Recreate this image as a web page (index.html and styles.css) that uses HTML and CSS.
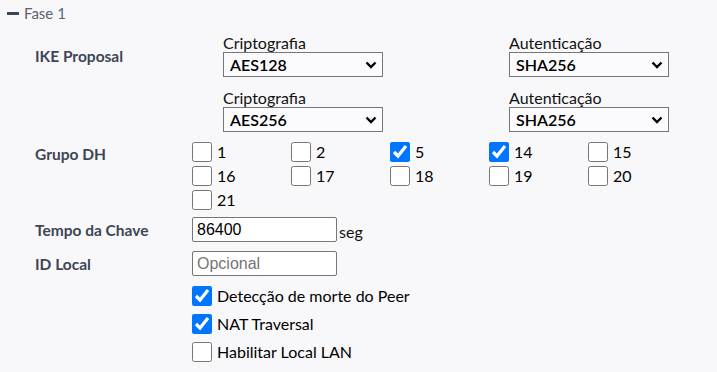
FILE: index.html
```html
<!DOCTYPE html>
<html lang="pt">
<head>
    <meta charset="UTF-8">
    <meta name="viewport" content="width=device-width, initial-scale=1.0">
    <title>Fase 1</title>
    <link rel="stylesheet" href="styles.css">
</head>
<body>
    <div class="phase-title">
        <span class="minus"></span>
        <span>Fase 1</span>
    </div>
    <div class="phase-body">
        <div class="row row-ike">
            <div class="row-label">IKE Proposal</div>
            <div class="proposals">
                <div class="field">
                    <label>Criptografia</label>
                    <div class="select-wrap">
                        <select>
                            <option>AES128</option>
                            <option>AES256</option>
                        </select>
                        <svg class="chevron" width="12" height="8" viewBox="0 0 12 8"><path d="M1.5 1.5 L6 6 L10.5 1.5" fill="none" stroke="#000" stroke-width="2.4"/></svg>
                    </div>
                </div>
                <div class="field">
                    <label>Autenticação</label>
                    <div class="select-wrap">
                        <select>
                            <option>SHA256</option>
                            <option>SHA1</option>
                        </select>
                        <svg class="chevron" width="12" height="8" viewBox="0 0 12 8"><path d="M1.5 1.5 L6 6 L10.5 1.5" fill="none" stroke="#000" stroke-width="2.4"/></svg>
                    </div>
                </div>
                <div class="field">
                    <label>Criptografia</label>
                    <div class="select-wrap">
                        <select>
                            <option>AES256</option>
                            <option>AES128</option>
                        </select>
                        <svg class="chevron" width="12" height="8" viewBox="0 0 12 8"><path d="M1.5 1.5 L6 6 L10.5 1.5" fill="none" stroke="#000" stroke-width="2.4"/></svg>
                    </div>
                </div>
                <div class="field">
                    <label>Autenticação</label>
                    <div class="select-wrap">
                        <select>
                            <option>SHA256</option>
                            <option>SHA1</option>
                        </select>
                        <svg class="chevron" width="12" height="8" viewBox="0 0 12 8"><path d="M1.5 1.5 L6 6 L10.5 1.5" fill="none" stroke="#000" stroke-width="2.4"/></svg>
                    </div>
                </div>
            </div>
        </div>

        <div class="row row-dh">
            <div class="row-label">Grupo DH</div>
            <div class="dh-grid">
                <label class="check"><input type="checkbox"> 1</label>
                <label class="check"><input type="checkbox"> 2</label>
                <label class="check"><input type="checkbox" checked> 5</label>
                <label class="check"><input type="checkbox" checked> 14</label>
                <label class="check"><input type="checkbox"> 15</label>
                <label class="check"><input type="checkbox"> 16</label>
                <label class="check"><input type="checkbox"> 17</label>
                <label class="check"><input type="checkbox"> 18</label>
                <label class="check"><input type="checkbox"> 19</label>
                <label class="check"><input type="checkbox"> 20</label>
                <label class="check"><input type="checkbox"> 21</label>
            </div>
        </div>

        <div class="row row-input">
            <div class="row-label">Tempo da Chave</div>
            <div class="inline">
                <input type="text" value="86400">
                <span class="unit">seg</span>
            </div>
        </div>

        <div class="row row-input row-local">
            <div class="row-label">ID Local</div>
            <div class="inline">
                <input type="text" placeholder="Opcional">
            </div>
        </div>

        <div class="row row-options">
            <div class="row-label"></div>
            <div class="options">
                <label class="check"><input type="checkbox" checked> Detecção de morte do Peer</label>
                <label class="check"><input type="checkbox" checked> NAT Traversal</label>
                <label class="check"><input type="checkbox"> Habilitar Local LAN</label>
            </div>
        </div>
    </div>
</body>
</html>
```

FILE: styles.css
```css
body {
    margin: 0;
    background-color: #f8f8fa;
    font-family: Lato, "Noto Sans", sans-serif;
    font-size: 16px;
    color: #111;
}
.phase-title {
    display: flex;
    align-items: center;
    gap: 5px;
    height: 20px;
    padding: 3px 7px 0;
    font-size: 15px;
    color: #5a6270;
}
.minus {
    width: 12px;
    height: 3px;
    background-color: #3d4654;
}
.phase-body {
    padding: 11px 0 0 35px;
}
.row {
    display: grid;
    grid-template-columns: 157px 1fr;
}
.row-label {
    font-size: 15.5px;
    font-weight: 700;
    color: #3d4654;
    line-height: 20px;
}
.row-ike .row-label {
    padding-top: 12px;
}
.proposals {
    display: grid;
    grid-template-columns: 286px 160px;
    row-gap: 12px;
    padding-left: 31px;
}
.field {
    display: flex;
    flex-direction: column;
}
.field label {
    height: 18px;
    line-height: 18px;
    color: #111;
}
.select-wrap {
    position: relative;
    width: 160px;
    height: 25px;
}
.select-wrap select {
    appearance: none;
    width: 160px;
    height: 25px;
    margin: 0;
    padding: 0 24px 0 6px;
    border: 1px solid #767676;
    border-radius: 0;
    background-color: #fbfbfd;
    font-family: Lato, sans-serif;
    font-size: 16px;
    font-weight: 600;
    color: #000;
}
.chevron {
    position: absolute;
    right: 6px;
    top: 9px;
    pointer-events: none;
}
.row-dh {
    margin-top: 10px;
}
.row-dh .row-label {
    padding-top: 2px;
}
.dh-grid {
    display: grid;
    grid-template-columns: repeat(5, 99px);
    row-gap: 4px;
}
.check {
    display: flex;
    align-items: center;
    gap: 5px;
    height: 20px;
    line-height: 20px;
    color: #000;
}
.check input {
    width: 20px;
    height: 20px;
    margin: 0;
}
.row-input {
    margin-top: 7px;
    align-items: center;
}
.row-local {
    margin-top: 9px;
}
.inline {
    display: flex;
    align-items: flex-end;
    gap: 2px;
}
.inline input {
    width: 145px;
    height: 25px;
    box-sizing: border-box;
    margin: 0;
    padding: 0 4px;
    border: 1px solid #767676;
    border-radius: 2px;
    background-color: #fff;
    font-family: "Liberation Sans", Arial, sans-serif;
    font-size: 16px;
    color: #000;
}
.inline input::placeholder {
    color: #757575;
}
.unit {
    line-height: 20px;
    color: #111;
}
.row-options {
    margin-top: 10px;
}
.options {
    display: flex;
    flex-direction: column;
    gap: 8px;
}
```
